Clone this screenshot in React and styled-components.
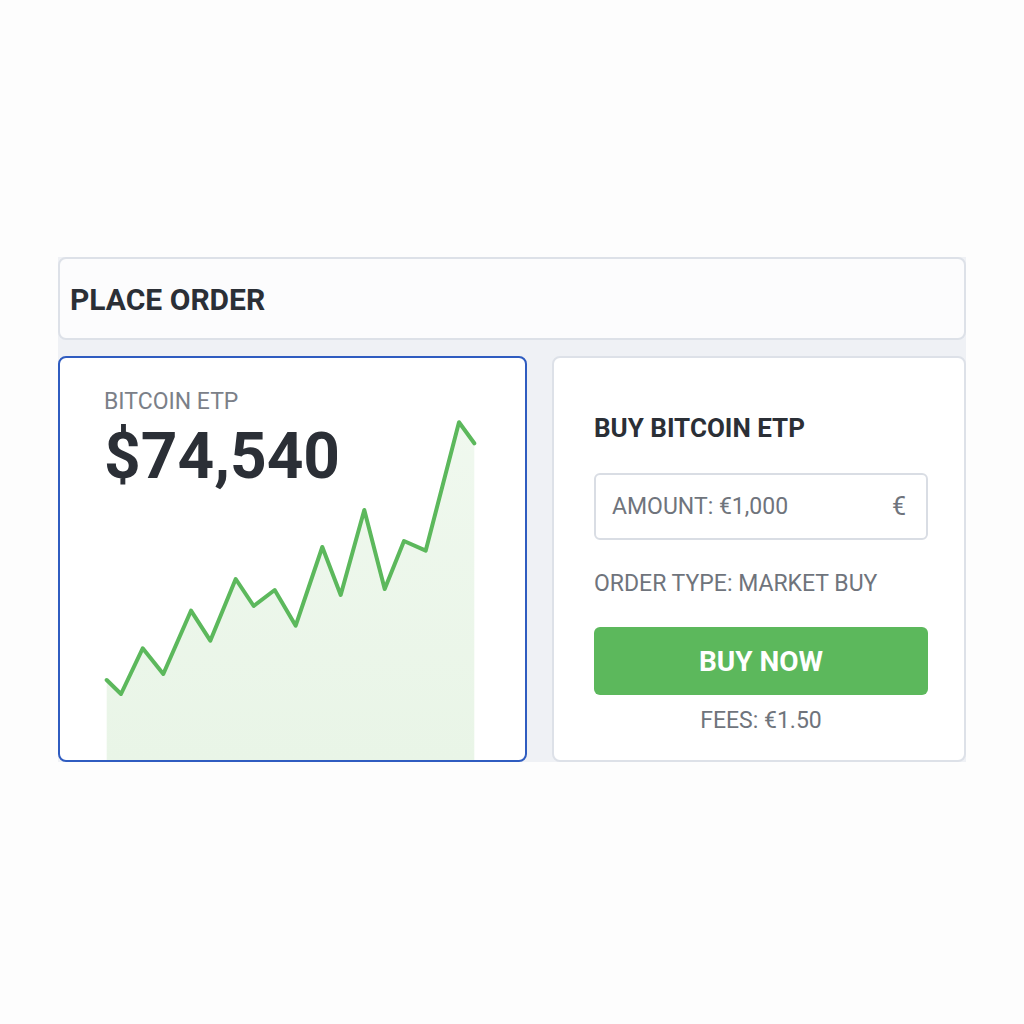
import React from 'react';
import styled, { createGlobalStyle } from 'styled-components';

const GlobalStyle = createGlobalStyle`
  html, body {
    margin: 0;
    padding: 0;
    background: #fdfdfd;
    font-family: Roboto, "Liberation Sans", Arial, sans-serif;
  }
  * { box-sizing: border-box; }
`;

const Page = styled.div`
  width: 1024px;
  height: 1024px;
  padding: 257px 0 0 58px;
`;

const Panel = styled.div`
  width: 908px;
  display: flex;
  flex-direction: column;
  gap: 16px;
  background: #eff1f5;
`;

const Header = styled.div`
  height: 83px;
  display: flex;
  align-items: center;
  padding: 2px 10px 0;
  background: #fcfcfd;
  border: 2px solid #dde1e8;
  border-radius: 8px;
`;

const Title = styled.h1`
  margin: 0;
  font-size: 30px;
  font-weight: 700;
  color: #2b2f36;
`;

const Row = styled.div`
  display: grid;
  grid-template-columns: 469px 414px;
  gap: 25px;
  height: 406px;
`;

const Card = styled.div`
  background: #fff;
  border: 2px solid ${({ $active }) => ($active ? '#2f5cc0' : '#dde1e8')};
  border-radius: 8px;
  overflow: hidden;
`;

const ChartCard = styled(Card)`
  display: grid;
  grid-template-areas: 'stack';
`;

const PriceBlock = styled.div`
  grid-area: stack;
  position: relative;
  z-index: 1;
  padding: 30px 0 0 44px;
  display: flex;
  flex-direction: column;
  gap: 10px;
`;

const Label = styled.div`
  font-size: 23px;
  line-height: 27px;
  color: #7b8088;
`;

const Price = styled.div`
  font-size: 64px;
  line-height: 64px;
  font-weight: 700;
  color: #2b2f36;
`;

const ChartSvg = styled.svg`
  grid-area: stack;
  align-self: end;
  margin-left: 44px;
  display: block;
`;

const OrderCard = styled(Card)`
  display: flex;
  flex-direction: column;
  padding: 55px 36px 0 40px;
`;

const OrderTitle = styled.h2`
  margin: 0;
  font-size: 26px;
  line-height: 30px;
  font-weight: 700;
  color: #2b2f36;
`;

const AmountField = styled.div`
  margin-top: 30px;
  height: 67px;
  border: 2px solid #d9dde4;
  border-radius: 6px;
  display: flex;
  align-items: center;
  justify-content: space-between;
  padding: 0 20px 0 16px;
  font-size: 23px;
  color: #6f747c;
`;

const Currency = styled.span`
  font-size: 25px;
`;

const Info = styled.div`
  font-size: 23px;
  line-height: 27px;
  color: #6f747c;
  margin-top: ${({ $gap }) => $gap}px;
  text-align: ${({ $center }) => ($center ? 'center' : 'left')};
`;

const BuyButton = styled.button`
  margin-top: 30px;
  height: 68px;
  width: 100%;
  border: none;
  border-radius: 6px;
  background: #5cb85c;
  color: #fff;
  font-family: inherit;
  font-size: 28px;
  font-weight: 700;
`;

const points = [
  [2.7, 262], [17, 276], [38.7, 230.3], [59.3, 256], [87, 192.7], [106.3, 222.7],
  [131.7, 161], [149.7, 188], [170.7, 172], [191.7, 207.7], [218.3, 129],
  [236.7, 177], [260.3, 92], [280.7, 171], [300, 123], [321.7, 132.7],
  [355, 4.3], [370.3, 25.3],
];

const Chart = () => {
  const line = points.map(([x, y]) => `${x},${y}`).join(' ');
  const area = `${line} 370.3,342 2.7,342`;
  return (
    <ChartSvg width="374" height="342" viewBox="0 0 374 342">
      <defs>
        <linearGradient id="fill" x1="0" y1="0" x2="0" y2="1">
          <stop offset="0" stopColor="#e6f4e4" stopOpacity="0.6" />
          <stop offset="1" stopColor="#e9f5e7" />
        </linearGradient>
      </defs>
      <polygon points={area} fill="url(#fill)" />
      <polyline points={line} fill="none" stroke="#5cb85c" strokeWidth="4"
        strokeLinejoin="round" strokeLinecap="round" />
    </ChartSvg>
  );
};

export default function App() {
  return (
    <Page>
      <GlobalStyle />
      <Panel>
        <Header>
          <Title>PLACE ORDER</Title>
        </Header>
        <Row>
          <ChartCard $active>
            <PriceBlock>
              <Label>BITCOIN ETP</Label>
              <Price>$74,540</Price>
            </PriceBlock>
            <Chart />
          </ChartCard>
          <OrderCard>
            <OrderTitle>BUY BITCOIN ETP</OrderTitle>
            <AmountField>
              <span>AMOUNT: €1,000</span>
              <Currency>€</Currency>
            </AmountField>
            <Info $gap={30}>ORDER TYPE: MARKET BUY</Info>
            <BuyButton>BUY NOW</BuyButton>
            <Info $gap={12} $center>FEES: €1.50</Info>
          </OrderCard>
        </Row>
      </Panel>
    </Page>
  );
}
